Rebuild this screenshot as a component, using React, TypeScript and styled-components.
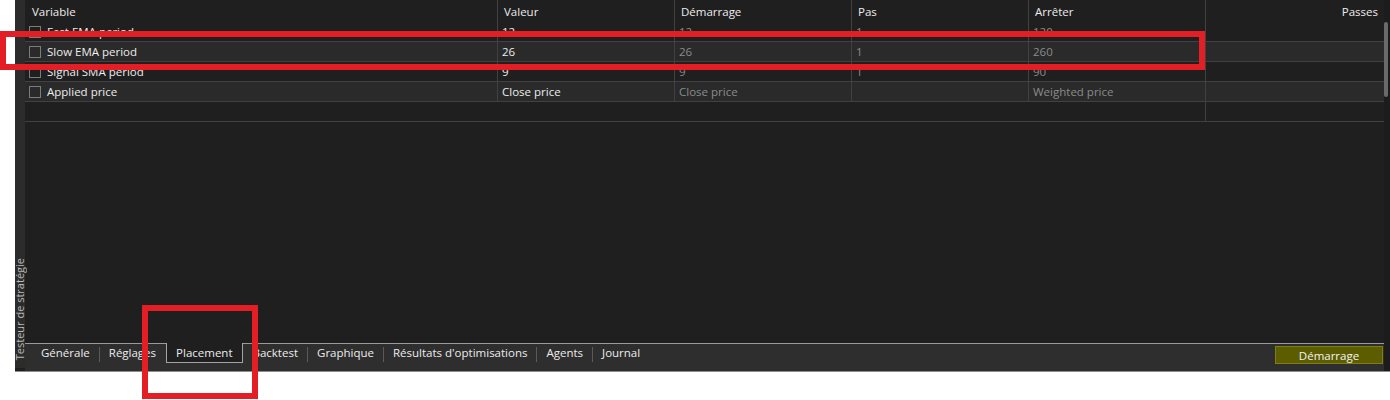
import React, { FC } from 'react';
import styled, { createGlobalStyle } from 'styled-components';

const FONT = '"Open Sans", "Noto Sans", sans-serif';

const GlobalStyle = createGlobalStyle`
  html, body {
    margin: 0;
    padding: 0;
    background: #ffffff;
  }
  body {
    font-family: ${FONT};
    font-size: 11.5px;
  }
`;

type Param = {
  name: string;
  value: string;
  start: string;
  step: string;
  stop: string;
};

const params: Param[] = [
  { name: 'Fast EMA period', value: '12', start: '12', step: '1', stop: '120' },
  { name: 'Slow EMA period', value: '26', start: '26', step: '1', stop: '260' },
  { name: 'Signal SMA period', value: '9', start: '9', step: '1', stop: '90' },
  { name: 'Applied price', value: 'Close price', start: 'Close price', step: '', stop: 'Weighted price' },
];

const tabs = ['Générale', 'Réglages', 'Placement', 'Backtest', 'Graphique', "Résultats d'optimisations", 'Agents', 'Journal'];
const ACTIVE_TAB = 'Placement';

const COLUMNS = '472px 177px 177px 177px 177px 1fr';

const Page = styled.div`
  position: relative;
  width: 1390px;
  height: 400px;
  overflow: hidden;
  background: #ffffff;
`;

const Window = styled.div`
  display: flex;
  margin-left: 15px;
  width: 1375px;
  height: 371px;
  background: #1f1f1f;
  border-bottom: 1px solid #8c8c8c;
`;

const SideStrip = styled.div`
  display: flex;
  flex-direction: column;
  justify-content: flex-end;
  align-items: center;
  width: 10px;
  height: 368px;
  padding-bottom: 8px;
  box-sizing: border-box;
  background: #2c2c2c;
  overflow: visible;
`;

const SideTitle = styled.span`
  writing-mode: vertical-rl;
  transform: rotate(180deg);
  font-size: 11px;
  line-height: 10px;
  color: #b8b8b8;
  white-space: nowrap;
`;

const Main = styled.div`
  display: flex;
  flex-direction: column;
  flex: 1;
  min-width: 0;
`;

const TableArea = styled.div`
  height: 343px;
  background: #1f1f1f;
`;

const Row = styled.div<{ $alt?: boolean; $height?: number; $line?: boolean }>`
  display: grid;
  grid-template-columns: ${COLUMNS};
  height: ${(p) => p.$height ?? 20}px;
  box-sizing: border-box;
  background: ${(p) => (p.$alt ? '#2a2a2a' : '#1f1f1f')};
  border-bottom: ${(p) => (p.$line ? '1px solid #414141' : 'none')};
`;

const Cell = styled.div<{ $sep?: boolean; $dim?: boolean; $pad?: number; $right?: boolean }>`
  display: flex;
  align-items: center;
  justify-content: ${(p) => (p.$right ? 'flex-end' : 'flex-start')};
  padding: 0 ${(p) => (p.$right ? 6 : 0)}px 0 ${(p) => p.$pad ?? 4}px;
  border-left: ${(p) => (p.$sep ? '1px solid #414141' : 'none')};
  color: ${(p) => (p.$dim ? '#8a8a8a' : '#ececec')};
  white-space: nowrap;
  overflow: hidden;
`;

const Check = styled.span`
  width: 10px;
  height: 10px;
  border: 1px solid #7c7c7c;
  margin-right: 6px;
  flex-shrink: 0;
`;

const TabBar = styled.div`
  display: flex;
  align-items: flex-start;
  height: 28px;
  box-sizing: border-box;
  padding-left: 7px;
  background: #2e2e2e;
  border-top: 1px solid #9a9a9a;
`;

const Tab = styled.div<{ $active?: boolean }>`
  height: ${(p) => (p.$active ? 19 : 18)}px;
  line-height: ${(p) => (p.$active ? 20 : 18)}px;
  margin-top: ${(p) => (p.$active ? -1 : 0)}px;
  padding: 0 9px;
  color: #ececec;
  white-space: nowrap;
  background: ${(p) => (p.$active ? '#1f1f1f' : 'transparent')};
  border: ${(p) => (p.$active ? '1px solid #a4a4a4' : 'none')};
  border-top: none;
`;

const TabSep = styled.span<{ $hidden?: boolean }>`
  width: 1px;
  height: 15px;
  margin-top: 3px;
  background: ${(p) => (p.$hidden ? 'transparent' : '#5a5a5a')};
`;

const StartButton = styled.button`
  margin: 2px 1px 0 auto;
  width: 108px;
  height: 18px;
  padding: 0;
  font-family: ${FONT};
  font-size: 11.5px;
  color: #f4f4f4;
  background: #5c5c00;
  border: 1px solid #7f7f10;
`;

const Gutter = styled.div`
  display: flex;
  flex-direction: column;
  width: 6px;
  background: #1c1c1c;
`;

const Thumb = styled.div`
  margin-top: 22px;
  width: 4px;
  height: 75px;
  border-radius: 2px;
  background: #6a6a6a;
`;

const Highlight = styled.div<{ $x: number; $y: number; $w: number; $h: number }>`
  position: absolute;
  left: ${(p) => p.$x}px;
  top: ${(p) => p.$y}px;
  width: ${(p) => p.$w}px;
  height: ${(p) => p.$h}px;
  box-sizing: border-box;
  border: 6px solid #e31e25;
  pointer-events: none;
`;

const ParamRow: FC<{ p: Param; alt: boolean }> = ({ p, alt }) => (
  <Row $alt={alt} $line>
    <Cell>
      <Check />
      {p.name}
    </Cell>
    <Cell $sep>{p.value}</Cell>
    <Cell $sep $dim>{p.start}</Cell>
    <Cell $sep $dim>{p.step}</Cell>
    <Cell $sep $dim>{p.stop}</Cell>
    <Cell $sep />
  </Row>
);

const App: FC = () => (
  <Page>
    <GlobalStyle />
    <Window>
      <SideStrip>
        <SideTitle>Testeur de stratégie</SideTitle>
      </SideStrip>
      <Main>
        <TableArea>
          <Row $height={22}>
            <Cell $pad={7}>Variable</Cell>
            <Cell $sep $pad={6}>Valeur</Cell>
            <Cell $sep $pad={6}>Démarrage</Cell>
            <Cell $sep $pad={6}>Pas</Cell>
            <Cell $sep $pad={6}>Arrêter</Cell>
            <Cell $sep $right>Passes</Cell>
          </Row>
          {params.map((p, i) => (
            <ParamRow key={p.name} p={p} alt={i % 2 === 1} />
          ))}
          <Row $line>
            <Cell />
            <Cell />
            <Cell />
            <Cell />
            <Cell />
            <Cell $sep />
          </Row>
        </TableArea>
        <TabBar>
          {tabs.map((t, i) => (
            <React.Fragment key={t}>
              {i > 0 && <TabSep $hidden={t === ACTIVE_TAB || tabs[i - 1] === ACTIVE_TAB} />}
              <Tab $active={t === ACTIVE_TAB}>{t}</Tab>
            </React.Fragment>
          ))}
          <StartButton type="button">Démarrage</StartButton>
        </TabBar>
      </Main>
      <Gutter>
        <Thumb />
      </Gutter>
    </Window>
    <Highlight $x={0} $y={31} $w={1205} $h={39} />
    <Highlight $x={142} $y={305} $w={116} $h={94} />
  </Page>
);

export default App;
